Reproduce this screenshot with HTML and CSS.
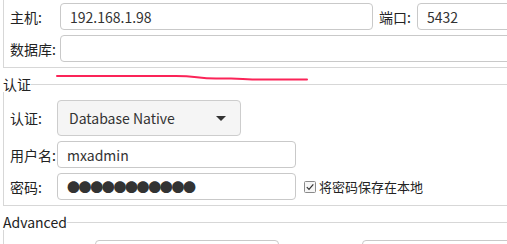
FILE: index.html
```html
<!DOCTYPE html>
<html lang="zh">
<head>
    <meta charset="UTF-8">
    <title>连接设置</title>
    <link rel="stylesheet" href="styles.css">
</head>
<body>
    <div class="dialog">
        <div class="group group-conn">
            <div class="conn-grid">
                <span class="label">主机:</span>
                <input class="field" type="text" value="192.168.1.98">
                <span class="label port-label">端口:</span>
                <input class="field" type="text" value="5432">
                <span class="label">数据库:</span>
                <input class="field field-wide" type="text" value="">
            </div>
        </div>

        <svg class="scribble" width="260" height="10" viewBox="0 0 260 10">
            <path d="M1 2 L120 2 C140 2 140 4 160 4.5 L175 4.5 C185 4.5 190 5.5 205 5.5 L251 5.5" fill="none" stroke="#fb2458" stroke-width="2" stroke-linecap="round"/>
        </svg>

        <div class="group-title">认证</div>
        <div class="group group-auth">
            <div class="row">
                <span class="label auth-label">认证:</span>
                <div class="combo">
                    <span>Database Native</span>
                    <span class="arrow"></span>
                </div>
            </div>
            <div class="row">
                <span class="label auth-label">用户名:</span>
                <input class="field field-user" type="text" value="mxadmin">
            </div>
            <div class="row">
                <span class="label auth-label">密码:</span>
                <div class="field field-user password">●●●●●●●●●●●</div>
                <label class="check">
                    <svg width="12" height="12" viewBox="0 0 12 12">
                        <rect x="0.5" y="0.5" width="11" height="11" rx="1" fill="#f6f6f6" stroke="#8a8a8a"/>
                        <path d="M2.8 6.2 L5 8.4 L9.3 3.3" fill="none" stroke="#333" stroke-width="1.2"/>
                    </svg>
                    将密码保存在本地
                </label>
            </div>
        </div>

        <div class="group-title">Advanced</div>
        <div class="group group-adv">
            <div class="adv-row">
                <div class="field adv-a"></div>
                <div class="field adv-b"></div>
            </div>
        </div>
    </div>
</body>
</html>
```

FILE: styles.css
```css
html, body {
    margin: 0;
    padding: 0;
    overflow: hidden;
    background-color: #ffffff;
}
body {
    font-family: "Noto Sans CJK SC", "Noto Sans", sans-serif;
    font-size: 14px;
    color: #222;
}
.dialog {
    position: relative;
    width: 620px;
    padding-left: 3px;
    margin-top: -10px;
}
.group {
    border: 1px solid #d7d7d7;
    border-top: none;
    padding-left: 6px;
}
.group-conn {
    border-top: 1px solid #d7d7d7;
    padding-top: 12px;
    padding-bottom: 5px;
}
.conn-grid {
    display: grid;
    grid-template-columns: 50px 313px 44px 150px;
    grid-auto-rows: 27px;
    row-gap: 5px;
    align-items: center;
}
.port-label {
    padding-left: 6px;
}
.field-wide {
    grid-column: 2 / 5;
}
.label {
    line-height: 1;
    white-space: nowrap;
}
.field {
    box-sizing: border-box;
    height: 27px;
    margin: 0;
    padding: 0 9px;
    border: 1px solid #c9c9c9;
    border-radius: 4px;
    background: #fff;
    font: inherit;
    font-size: 14px;
    color: #333;
    outline: none;
}
.scribble {
    position: absolute;
    left: 56px;
    top: 84px;
}
.group-title {
    display: flex;
    align-items: center;
    height: 16px;
    margin-top: 8px;
    line-height: 16px;
}
.group-title::after {
    content: "";
    flex: 1;
    height: 1px;
    background-color: #d7d7d7;
}
.group-auth {
    padding-top: 8px;
    padding-bottom: 5px;
}
.row {
    display: flex;
    align-items: center;
    margin-bottom: 5px;
}
.row:last-child {
    margin-bottom: 0;
}
.auth-label {
    width: 47px;
}
.combo {
    box-sizing: border-box;
    display: flex;
    align-items: center;
    justify-content: space-between;
    width: 184px;
    height: 36px;
    padding: 0 14px 0 11px;
    border: 1px solid #cdcdcd;
    border-radius: 4px;
    background-color: #f5f5f5;
    color: #333;
}
.arrow {
    width: 0;
    height: 0;
    border-left: 5px solid transparent;
    border-right: 5px solid transparent;
    border-top: 5px solid #333;
}
.field-user {
    width: 239px;
}
.password {
    display: flex;
    align-items: center;
    font-size: 13px;
    letter-spacing: -1.4px;
    color: #333;
}
.check {
    display: flex;
    align-items: center;
    gap: 3px;
    margin-left: 8px;
    font-size: 13px;
    color: #222;
}
.group-adv {
    height: 40px;
    padding-top: 10px;
}
.adv-row {
    display: flex;
    gap: 83px;
    padding-left: 85px;
}
.adv-a {
    width: 184px;
}
.adv-b {
    width: 200px;
}
```
